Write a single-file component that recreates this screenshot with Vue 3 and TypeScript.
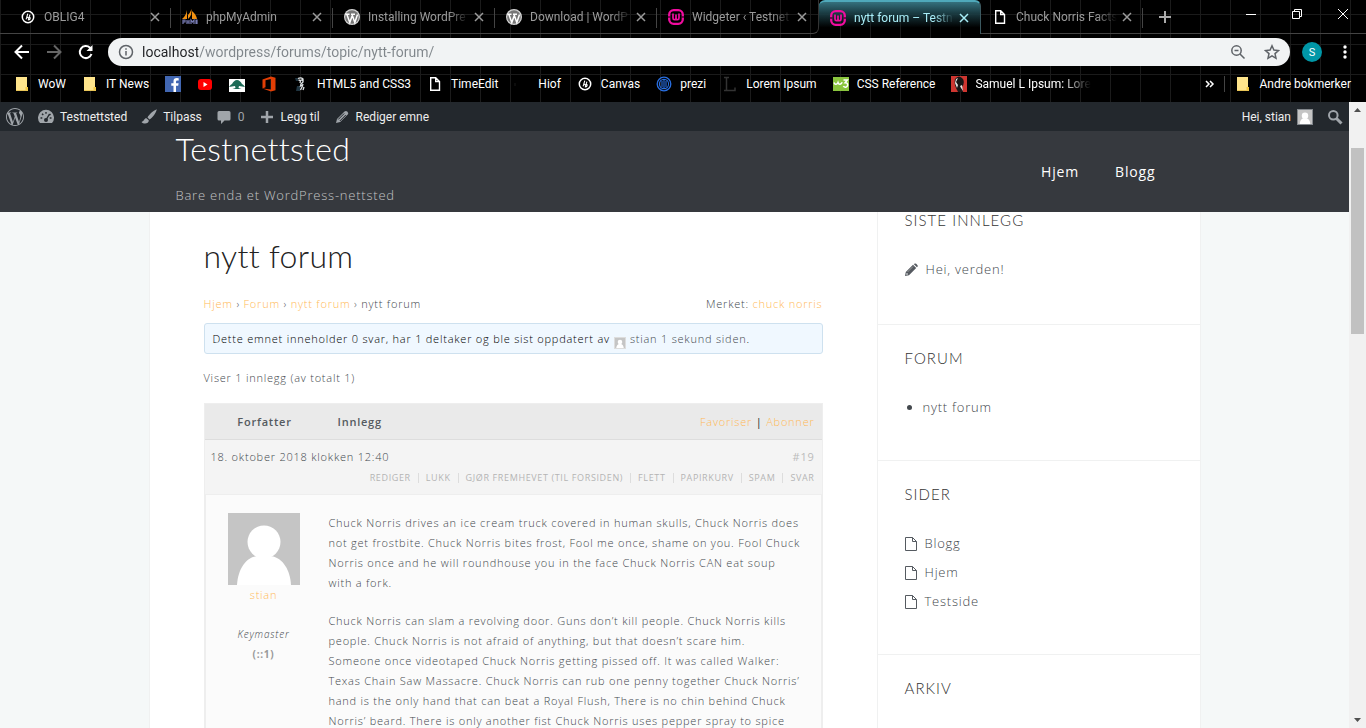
<script setup lang="ts">
interface Tab {
  icon: string
  title: string
  active?: boolean
}
interface Bookmark {
  icon: string
  label?: string
  fade?: boolean
}

const tabs: Tab[] = [
  { icon: 'canvas', title: 'OBLIG4' },
  { icon: 'pma', title: 'phpMyAdmin' },
  { icon: 'wpball', title: 'Installing WordPre' },
  { icon: 'wpball', title: 'Download | WordP' },
  { icon: 'wamp', title: 'Widgeter ‹ Testnet' },
  { icon: 'wamp', title: 'nytt forum – Testn', active: true },
  { icon: 'doc', title: 'Chuck Norris Facts' },
]

const bookmarks: Bookmark[] = [
  { icon: 'folder', label: 'WoW' },
  { icon: 'folder', label: 'IT News' },
  { icon: 'facebook' },
  { icon: 'youtube' },
  { icon: 'tree' },
  { icon: 'office' },
  { icon: 'sketch', label: 'HTML5 and CSS3' },
  { icon: 'doc', label: 'TimeEdit' },
  { icon: 'blank', label: 'Hiof' },
  { icon: 'canvas', label: 'Canvas' },
  { icon: 'prezi', label: 'prezi' },
  { icon: 'lorem', label: 'Lorem Ipsum' },
  { icon: 'w3', label: 'CSS Reference' },
  { icon: 'samuel', label: 'Samuel L Ipsum: Lore', fade: true },
]

const postActions = ['Rediger', 'Lukk', 'Gjør fremhevet (til forsiden)', 'Flett', 'Papirkurv', 'Spam', 'Svar']

const paragraphs: string[][] = [
  [
    'Chuck Norris drives an ice cream truck covered in human skulls, Chuck Norris does',
    'not get frostbite. Chuck Norris bites frost, Fool me once, shame on you. Fool Chuck',
    'Norris once and he will roundhouse you in the face Chuck Norris CAN eat soup',
    'with a fork.',
  ],
  [
    'Chuck Norris can slam a revolving door. Guns don’t kill people. Chuck Norris kills',
    'people. Chuck Norris is not afraid of anything, but that doesn’t scare him.',
    'Someone once videotaped Chuck Norris getting pissed off. It was called Walker:',
    'Texas Chain Saw Massacre. Chuck Norris can rub one penny together Chuck Norris’',
    'hand is the only hand that can beat a Royal Flush, There is no chin behind Chuck',
    'Norris’ beard. There is only another fist Chuck Norris uses pepper spray to spice',
  ],
]

const pages = ['Blogg', 'Hjem', 'Testside']
</script>

<template>
  <div class="window">
    <svg class="sprite" aria-hidden="true">
      <symbol id="canvas" viewBox="0 0 16 16">
        <circle cx="8" cy="8" r="5.700" fill="none" stroke="#fff" stroke-width="1.500" />
        <path d="M7.800 4.600 6.100 10.400M6.500 9c.6-1.200 1.900-.8 1.500.4M9.900 5.600 8.200 11.400M8.500 10.500c.9.500 1.900-.5 1.600-1.700-.2-.6-.7-.7-1.100-.4" fill="none" stroke="#fff" stroke-width="1.100" />
      </symbol>
      <symbol id="pma" viewBox="0 0 16 16">
        <path d="M5 1v9H0q4-3 5-9zM9.500 0q.5 7-3.500 10V6q2-2 3.500-6zM10 2q4 3 5 8h-5z" fill="#f29111" />
        <path d="M1 15v-4h2v2H1m4 2v-4m0 2h2m0-2v4m2 0v-4l1.500 2L12 11v4m2 0v-4h1v4" fill="none" stroke="#777bb3" stroke-width="1.200" />
      </symbol>
      <symbol id="wp" viewBox="0 0 24 24">
        <path d="M21.469 6.825c.84 1.537 1.318 3.3 1.318 5.175 0 3.979-2.156 7.456-5.363 9.325l3.295-9.527c.615-1.54.82-2.771.82-3.864 0-.405-.026-.78-.07-1.11m-7.981.105c.647-.03 1.232-.105 1.232-.105.582-.075.514-.93-.067-.899 0 0-1.755.135-2.88.135-1.064 0-2.85-.15-2.85-.15-.585-.03-.661.855-.075.885 0 0 .54.061 1.125.09l1.68 4.605-2.37 7.08L5.354 6.9c.649-.03 1.234-.1 1.234-.1.585-.075.516-.93-.065-.896 0 0-1.746.138-2.874.138-.2 0-.438-.008-.69-.015C4.911 3.15 8.235 1.215 12 1.215c2.809 0 5.365 1.072 7.286 2.833-.046-.003-.091-.009-.141-.009-1.06 0-1.812.923-1.812 1.914 0 .89.513 1.643 1.06 2.531.411.72.89 1.643.89 2.977 0 .915-.354 1.994-.821 3.479l-1.075 3.585-3.9-11.61.001.014zM12 22.784c-1.059 0-2.081-.153-3.048-.437l3.237-9.406 3.315 9.087c.024.053.05.101.078.149-1.12.393-2.325.609-3.582.609M1.211 12c0-1.564.336-3.05.935-4.39L7.29 21.709C3.694 19.96 1.212 16.271 1.211 12M12 0C5.385 0 0 5.385 0 12s5.385 12 12 12 12-5.385 12-12S18.615 0 12 0" fill="currentColor" />
      </symbol>
      <symbol id="wpball" viewBox="0 0 16 16">
        <circle cx="8" cy="8" r="8" fill="#d5d5d5" />
        <circle cx="8" cy="8" r="6.800" fill="#777" />
        <path d="M1.500 5.200h4M2.800 5.300l3 8.200L8 7.200M7 5.200h4M8 5.600l2.800 7.900 2.700-8" fill="none" stroke="#fff" stroke-width="1.500" />
      </symbol>
      <symbol id="wamp" viewBox="0 0 16 16">
        <rect x="1.200" y="1.200" width="13.600" height="13.600" rx="4.500" fill="none" stroke="#f20ca0" stroke-width="2.300" />
        <path d="M0 8h2.400M13.600 8H16" stroke="#000" stroke-width="1.200" />
        <path d="M5 4.500V9q0 1.700 1.500 1.700T8 9V5.500M8 9q0 1.700 1.500 1.700T11 9V4.500" fill="none" stroke="#f20ca0" stroke-width="1.700" />
      </symbol>
      <symbol id="doc" viewBox="0 0 16 16">
        <path d="M3.700 1.700h5l3.800 3.800v8.800H3.700zM8.700 1.700v3.800h3.800" fill="none" stroke="#fff" stroke-width="1.400" />
      </symbol>
      <symbol id="folder" viewBox="0 0 16 16">
        <path d="M2 1h11v10h1v4H2z" fill="#ffe58c" />
        <path d="M11.500 15v-4h2.500v4z" fill="#f3c944" />
        <path d="M2 14.500h11" stroke="#e9c558" />
      </symbol>
      <symbol id="facebook" viewBox="0 0 16 16">
        <rect width="16" height="16" fill="#4267b2" />
        <path d="M11 16V9.800h2.200l.4-2.500H11V5.800q0-1.300 1.300-1.300h1.400V2.300q-5.200-1-5.200 3v2H6.300v2.500h2.200V16z" fill="#fff" />
      </symbol>
      <symbol id="youtube" viewBox="0 0 16 16">
        <rect x="1" y="3" width="14" height="11" rx="3" fill="#f00" />
        <path d="m6.500 6 4 2.500-4 2.500z" fill="#fff" />
      </symbol>
      <symbol id="tree" viewBox="0 0 16 16">
        <path d="M0 3h16v13H0z" fill="#fff" />
        <path d="M0 11c1-1 1-2 3-3 1-2 3-4 5-4s4 2 5 4c2 1 2 2 3 3l-3-.500-3-.5-.5 2 3 1h-9l3-1-.5-2-3 .5z" fill="#1d6b57" />
      </symbol>
      <symbol id="office" viewBox="0 0 16 16">
        <path d="M1.500 3.500 10 .5l4.500 1.200v12.600L10 15.500l-8.500-3L10 13.400V3L4.500 4.200v7l-3 1.300z" fill="#e13e05" />
      </symbol>
      <symbol id="sketch" viewBox="0 0 16 16">
        <path d="M2 2h3v3H3zM4 10h3v5H3z" fill="#1f3440" />
        <path d="M5 2.500q3-1.500 5 .5v3L8 8M5.500 4l2 .5L7 7M9 3v2M8 8l-.5 2 2-1M10 8l-1 3-1.500 3M11 11l-1 3" fill="none" stroke="#dfe3e5" stroke-width="1.300" />
      </symbol>
      <symbol id="blank" viewBox="0 0 16 16"><path d="M1 7v3" stroke="#191919" /></symbol>
      <symbol id="prezi" viewBox="0 0 16 16">
        <circle cx="8" cy="8" r="6.800" fill="none" stroke="#286ee0" stroke-width="1.300" />
        <circle cx="8" cy="8" r="4.600" fill="none" stroke="#286ee0" stroke-width="1.100" />
        <path d="M6 5v6M8 4v8M10 5v6" stroke="#286ee0" stroke-width="1.100" />
      </symbol>
      <symbol id="lorem" viewBox="0 0 16 16">
        <path d="M2 1.500h5M4.500 2v12M2 14.500h11v-3" fill="none" stroke="#333" stroke-width="1.500" />
      </symbol>
      <symbol id="w3" viewBox="0 0 16 16">
        <rect y="1" width="16" height="14" fill="#8ac53e" />
        <path d="M1 6.500q.6 2 2 1.800T5 6.500q.6 2 2 1.800t2.200-2M10.500 4h3.800l-2.200 2.700q2.700 0 2.500 2.400c-.3 2.500-3 2.600-4.300 1" fill="none" stroke="#fff" stroke-width="1.500" />
      </symbol>
      <symbol id="samuel" viewBox="0 0 16 16">
        <rect width="16" height="16" fill="#ce3630" />
        <path d="M4 3q4-5 8 0 2 4-1 8l1 5H7L5 12Q3 8 4 3z" fill="#161616" />
        <path d="m5 3 2-1-2 4 2 3-1 3-2-5zm4 7 2-1 1 6-2-3z" fill="#e8e5e3" />
      </symbol>
      <symbol id="person" viewBox="0 0 72 72">
        <rect width="72" height="72" fill="#c5c5c5" />
        <circle cx="36" cy="29" r="16.500" fill="#fff" />
        <path d="M9 72c1-17 10-29 22-29h10c12 0 21 12 22 29z" fill="#fff" />
      </symbol>
      <symbol id="page" viewBox="0 0 12 14">
        <path d="M.5.500h7l4 4v9H.5zM7.500.500v4h4" fill="none" stroke="#555a60" />
      </symbol>
    </svg>

    <header class="chrome">
      <div class="tabstrip">
        <span class="edge"></span>
        <div v-for="(tab, i) in tabs" :key="i" class="tab" :class="{ active: tab.active, before: tabs[i + 1]?.active }">
          <svg class="i16"><use :href="'#' + tab.icon" /></svg>
          <span class="tab-title">{{ tab.title }}</span>
          <button class="close" aria-label="Lukk fane">
            <svg viewBox="0 0 10 10"><path d="m1 1 8 8M9 1 1 9" /></svg>
          </button>
        </div>
        <div class="strip-rest">
          <button class="plus" aria-label="Ny fane">
            <svg viewBox="0 0 12 12"><path d="M6 0v12M0 6h12" /></svg>
          </button>
          <div class="controls">
            <button aria-label="Minimer"><svg viewBox="0 0 12 12"><path d="M1 6.500h10" /></svg></button>
            <button aria-label="Gjenopprett">
              <svg viewBox="0 0 12 12"><path d="M1.500 3.500h7v7h-7zM3.500 3.500v-2h7v7h-2" /></svg>
            </button>
            <button aria-label="Lukk"><svg viewBox="0 0 12 12"><path d="m1 1 10 10M11 1 1 11" /></svg></button>
          </div>
        </div>
      </div>

      <div class="toolbar">
        <button class="nav" aria-label="Tilbake"><svg viewBox="0 0 16 16"><path d="M15 8H2M8 1.500 1.500 8 8 14.500" /></svg></button>
        <button class="nav dim" aria-label="Frem"><svg viewBox="0 0 16 16"><path d="M1 8h13M8 1.500 14.500 8 8 14.500" /></svg></button>
        <button class="nav" aria-label="Last inn på nytt">
          <svg viewBox="0 0 16 16"><path d="M13.500 10A6 6 0 1 1 12 3.800L13.500 5.500" /><path d="M14.500 1v6h-6z" fill="#fff" stroke="none" /></svg>
        </button>
        <div class="omnibox">
          <svg class="i16 grey" viewBox="0 0 16 16"><circle cx="8" cy="8" r="6.500" /><path d="M8 7v4.500M8 4.200v1.600" /></svg>
          <input class="url" type="text" aria-label="Adresse" value="localhost/wordpress/forums/topic/nytt-forum/" />
          <button aria-label="Zoom">
            <svg class="i16 grey" viewBox="0 0 16 16"><circle cx="6.500" cy="6.500" r="4.700" /><path d="m10 10 4.500 4.500M4.500 6.500h4" /></svg>
          </button>
          <button aria-label="Bokmerk">
            <svg class="i16 grey" viewBox="0 0 16 16"><path d="m8 1.800 1.900 4.300 4.600.4L11 9.600l1 4.700-4-2.500-4 2.500 1-4.700-3.500-3.100 4.600-.4z" /></svg>
          </button>
        </div>
        <button class="profile" aria-label="Profil">S</button>
        <button class="dots" aria-label="Meny"><svg viewBox="0 0 4 16"><circle cx="2" cy="3" r="1.700" /><circle cx="2" cy="8" r="1.700" /><circle cx="2" cy="13" r="1.700" /></svg></button>
      </div>

      <nav class="bookmarks">
        <a v-for="(b, i) in bookmarks" :key="i" href="#" :class="{ fade: b.fade }">
          <svg class="i16"><use :href="'#' + b.icon" /></svg>
          <span v-if="b.label">{{ b.label }}</span>
        </a>
        <span class="grow"></span>
        <button class="more" aria-label="Flere bokmerker">
          <svg viewBox="0 0 10 8"><path d="m1 1 3 3-3 3M5 1l3 3-3 3" /></svg>
        </button>
        <a class="other" href="#"><svg class="i16"><use href="#folder" /></svg><span>Andre bokmerker</span></a>
      </nav>
    </header>

    <div class="viewport">
      <div class="page">
        <div class="adminbar">
          <a href="#" aria-label="WordPress"><svg class="i18"><use href="#wp" /></svg></a>
          <a href="#" class="site">
            <svg class="i16" viewBox="0 0 16 16"><path d="M2 14a8 8 0 1 1 12 0z" fill="currentColor" /><path d="m8 11 3.500-6M2.500 9h1.800M4 4.800l1.300 1.300M8 3v1.800M13.500 9h-1.800M12.500 5l-1 1" stroke="#23282d" stroke-width="1.400" /><circle cx="8" cy="11" r="2" fill="#23282d" /></svg>
            <span>Testnettsted</span>
          </a>
          <a href="#">
            <svg class="i16" viewBox="0 0 16 16"><path d="M15.800.3C12 2 8 5.500 6.500 8.500l2 2C11.500 9 15 4 15.800.3zM5.500 9.200C3 9 3.500 12 .5 13c2 2.500 7.500 2 7.300-1.700z" fill="currentColor" /></svg>
            <span>Tilpass</span>
          </a>
          <a href="#">
            <svg class="i16" viewBox="0 0 16 16"><path d="M3 2h10q1.500 0 1.500 1.500V10q0 1.500-1.500 1.500H8.500L5 15v-3.500H3Q1.500 11.500 1.500 10V3.500Q1.500 2 3 2z" fill="currentColor" /></svg>
            <span class="count">0</span>
          </a>
          <a href="#">
            <svg class="i16" viewBox="0 0 16 16"><path d="M8 2v12M2 8h12" stroke="currentColor" stroke-width="2.500" /></svg>
            <span>Legg til</span>
          </a>
          <a href="#">
            <svg class="i16" viewBox="0 0 16 16"><path d="m2 14 1-4 7.500-7.500q1.500-1.200 3 .3t.2 2.800L6.200 13z" fill="currentColor" /><path d="m4.200 10.500 6-6M5.800 12l6-6" stroke="#23282d" /></svg>
            <span>Rediger emne</span>
          </a>
          <span class="grow"></span>
          <a href="#"><span>Hei, stian</span><svg class="i16 frame"><use href="#person" /></svg></a>
          <button aria-label="Søk">
            <svg class="i16" viewBox="0 0 16 16"><circle cx="6.300" cy="6.300" r="4.300" fill="none" stroke="currentColor" stroke-width="2" /><path d="m9.500 9.500 5 5" stroke="currentColor" stroke-width="3" /></svg>
          </button>
        </div>

        <div class="masthead">
          <div class="masthead-in">
            <div>
              <a class="brand" href="#">Testnettsted</a>
              <p class="tagline">Bare enda et WordPress-nettsted</p>
            </div>
            <nav class="menu"><a href="#">Hjem</a><a href="#">Blogg</a></nav>
          </div>
        </div>

        <div class="content">
          <main>
            <h1>nytt forum</h1>
            <div class="crumbs">
              <span><a href="#">Hjem</a> › <a href="#">Forum</a> › <a href="#">nytt forum</a> › nytt forum</span>
              <span>Merket: <a href="#">chuck norris</a></span>
            </div>
            <div class="notice">
              Dette emnet inneholder 0 svar, har 1 deltaker og ble sist oppdatert av
              <svg class="mini"><use href="#person" /></svg>
              <span><a href="#">stian</a> <a href="#">1 sekund siden</a>.</span>
            </div>
            <p class="showing">Viser 1 innlegg (av totalt 1)</p>
            <section class="topic">
              <div class="topic-head">
                <strong class="author-label">Forfatter</strong>
                <strong class="post-label">Innlegg</strong>
                <span class="follow"><a href="#">Favoriser</a> <b>|</b> <a href="#">Abonner</a></span>
              </div>
              <div class="meta">
                <div class="meta-row"><span>18. oktober 2018 klokken 12:40</span><a class="num" href="#">#19</a></div>
                <div class="actions"><a v-for="a in postActions" :key="a" href="#">{{ a }}</a></div>
              </div>
              <div class="post">
                <div class="author">
                  <svg class="avatar"><use href="#person" /></svg>
                  <a href="#">stian</a>
                  <em>Keymaster</em>
                  <b>(::1)</b>
                </div>
                <div class="post-body">
                  <p v-for="(p, i) in paragraphs" :key="i">
                    <template v-for="line in p" :key="line">{{ line }}<br /></template>
                  </p>
                </div>
              </div>
            </section>
          </main>

          <aside>
            <section class="latest">
              <h2>Siste innlegg</h2>
              <ul>
                <li>
                  <svg class="pencil" viewBox="0 0 13 13"><path d="m0 13 .8-4L8 1.800 11.200 5 4 12.200zM8.700 1.100Q10 0 11.200.8l1.300 1.400q.7 1-.6 2.100z" fill="#555a60" /><path d="m2.500 9 5.500-5.500" stroke="#aaa" stroke-width=".8" /><circle cx="2" cy="11" r=".8" fill="#fff" /></svg>
                  <a href="#">Hei, verden!</a>
                </li>
              </ul>
            </section>
            <section>
              <h2>Forum</h2>
              <ul class="bullets"><li><a href="#">nytt forum</a></li></ul>
            </section>
            <section>
              <h2>Sider</h2>
              <ul>
                <li v-for="p in pages" :key="p"><svg class="sheet"><use href="#page" /></svg><a href="#">{{ p }}</a></li>
              </ul>
            </section>
            <section><h2>Arkiv</h2></section>
          </aside>
        </div>
      </div>
      <div class="scrollbar">
        <svg viewBox="0 0 17 17"><path d="m5 10 3.500-4 3.500 4z" /></svg>
        <div class="track"><div class="thumb"></div></div>
        <svg viewBox="0 0 17 17"><path d="m5 7 3.500 4L12 7z" /></svg>
      </div>
    </div>
  </div>
</template>

<style>
html, body { margin: 0; overflow: hidden; }
</style>

<style scoped>
* { box-sizing: border-box; }
p, h1, h2, ul { margin: 0; padding: 0; }
ul { list-style: none; }
a { text-decoration: none; color: inherit; }
button { border: 0; padding: 0; background: none; color: inherit; font: inherit; display: flex; align-items: center; justify-content: center; }
svg { flex: none; display: block; }
.sprite { position: absolute; width: 0; height: 0; }
.i16 { width: 16px; height: 16px; }
.i18 { width: 18px; height: 18px; }
.grow { flex: 1; }
.window { display: flex; flex-direction: column; height: 100vh; overflow: hidden; font-family: "Open Sans", sans-serif; }

.chrome {
  background-color: #000;
  background-image: linear-gradient(#1b1b1b 1px, transparent 1px), linear-gradient(90deg, #1b1b1b 1px, transparent 1px);
  background-size: 30px 30px;
  background-position: 0 14px;
  color: #fff;
  font-family: Roboto, sans-serif;
  font-size: 12px;
}
.tabstrip { display: flex; height: 34px; }
.edge { width: 9px; border-bottom: 1px solid #444; }
.tab { display: flex; align-items: center; width: 162px; padding: 0 8px 0 11px; border-bottom: 1px solid #444; color: #9b9b9b; background: linear-gradient(#444, #444) right 8px / 1px 20px no-repeat; }
.tab.before { border-bottom-right-radius: 6px; border-right: 1px solid #333; background: none; }
.tab.active { border: 1px solid #3c5960; border-top: 2px solid #4fa9ba; border-bottom: 0; border-left: 0; border-radius: 6px 6px 0 0; color: #a9eef8; background: linear-gradient(#35717d, #1a3b42 35%, transparent 80%); padding-bottom: 1px; }
.tab-title { flex: 1; min-width: 0; margin-left: 8px; overflow: hidden; white-space: nowrap; -webkit-mask-image: linear-gradient(90deg, #000 78%, transparent 98%); mask-image: linear-gradient(90deg, #000 78%, transparent 98%); }
.close { width: 16px; height: 16px; }
.close svg { width: 10px; height: 10px; stroke: currentColor; stroke-width: 1.5; }
.strip-rest { flex: 1; display: flex; justify-content: space-between; border-bottom: 1px solid #444; }
.plus { width: 44px; color: #aaa; }
.plus svg { width: 12px; height: 12px; stroke: currentColor; stroke-width: 2; }
.controls { display: flex; height: 28px; }
.controls button { width: 46px; }
.controls svg { width: 12px; height: 12px; fill: none; stroke: #fff; }
.toolbar { display: flex; align-items: center; height: 36px; padding: 0 12px 0 6px; }
.nav { width: 32px; height: 32px; }
.nav svg { width: 16px; height: 16px; fill: none; stroke: #fff; stroke-width: 2; }
.nav.dim svg { stroke: #666; }
.omnibox { flex: 1; display: flex; align-items: center; height: 28px; margin-left: 6px; padding: 0 10px; border-radius: 14px; background: #f1f3f4; }
.omnibox button { margin-left: 18px; }
.grey { fill: none; stroke: #5f6368; stroke-width: 1.5; }
.url {
  flex: 1; min-width: 0; height: 24px; margin-left: 8px; padding: 0; border: 0; outline: 0;
  font-family: Roboto, sans-serif; font-size: 14px; color: transparent;
  background: linear-gradient(90deg, #202124 56px, #80868b 56px); -webkit-background-clip: text; background-clip: text;
}
.profile { width: 20px; height: 20px; margin: 0 22px 0 12px; border-radius: 50%; background: #0097a7; font-size: 11px; }
.dots { width: 10px; }
.dots svg { width: 4px; height: 16px; fill: #fff; margin-right: 8px; }
.bookmarks { display: flex; align-items: center; gap: 16px; height: 32px; padding: 0 15px 4px 14px; white-space: nowrap; }
.bookmarks a { display: flex; align-items: center; gap: 8px; }
.fade span { -webkit-mask-image: linear-gradient(90deg, #000 75%, transparent); mask-image: linear-gradient(90deg, #000 75%, transparent); }
.more { margin-right: -7px; }
.more svg { width: 10px; height: 8px; fill: none; stroke: #fff; stroke-width: 1.5; }
.other { border-left: 1px solid #444; padding-left: 10px; height: 16px; }

.viewport { flex: 1; min-height: 0; display: flex; }
.page { flex: 1; min-width: 0; overflow: hidden; background: #f5f8f8; color: #43484d; font-weight: 300; }
.adminbar { display: flex; align-items: center; gap: 14px; height: 29px; padding: 0 6px; background: #23282d; color: #a0a5aa; font-family: Roboto, sans-serif; font-size: 12px; font-weight: 400; }
.adminbar a { display: flex; align-items: center; gap: 6px; color: #a0a5aa; }
.adminbar span { color: #eee; }
.adminbar .count { color: #a0a5aa; }
.frame { border: 1px solid #82878c; }
.masthead { height: 81px; background: #36393e; }
.masthead-in { display: flex; justify-content: space-between; max-width: 1052px; height: 81px; margin: 0 auto; padding: 0 45px 0 27px; }
.brand { display: block; font: 300 32px/36px Lato, sans-serif; color: #fff; }
.tagline { margin-top: 18px; font-size: 13px; line-height: 20px; letter-spacing: 0.06em; color: #c3c4c5; }
.menu { display: flex; align-items: center; gap: 36px; font-size: 14px; font-weight: 400; letter-spacing: 0.06em; color: #fff; }
.content { display: flex; max-width: 1052px; margin: 0 auto; background: #fff; border: 1px solid #f0f1f1; border-width: 0 1px; }
main { flex: 1; min-width: 0; padding: 24px 54px 0; font-size: 11px; line-height: 20px; letter-spacing: 0.07em; }
h1 { font: 300 32px/40px Lato, sans-serif; letter-spacing: 0.01em; color: #222; }
.brand { letter-spacing: 0.01em; }
.crumbs { display: flex; justify-content: space-between; margin-top: 18px; }
.crumbs a, .follow a, .author a { color: #ffb957; }
.notice { display: flex; align-items: center; gap: 4px; height: 31px; margin-top: 9px; padding: 0 8px; border: 1px solid #cee1ef; border-radius: 3px; background: #f0f8ff; color: #000; white-space: nowrap; }
.notice a { color: #43484d; }
.mini { width: 12px; height: 12px; margin-top: 8px; border: 1px solid #ddd; }
.showing { margin-top: 14px; }
.topic { margin-top: 15px; border: 1px solid #eee; background: #fbfbfb; }
.topic-head { display: flex; align-items: center; height: 36px; padding-right: 7px; background: #eaeaea; border-bottom: 1px solid #ddd; }
.topic-head strong { font-weight: 600; color: #555a60; }
.author-label { width: 120px; text-align: center; }
.post-label { margin-left: 13px; }
.follow { margin-left: auto; color: #222; }
.follow b { font-weight: 400; }
.meta { padding: 7px 7px 6px 6px; background: #f4f4f4; border-bottom: 1px solid #eee; }
.meta-row { display: flex; justify-content: space-between; }
.num { color: #bbb; font-weight: 400; }
.actions { display: flex; justify-content: flex-end; align-items: center; height: 20px; margin-top: 1px; font-size: 9px; line-height: 10px; font-weight: 400; letter-spacing: 0.07em; text-transform: uppercase; color: #b5b5b5; }
.actions a + a { margin-left: 7px; padding-left: 7px; border-left: 1px solid #ddd; }
.post { display: flex; padding: 18px 6px 0 0; border: 1px solid #eee; border-width: 0 1px; }
.author { display: flex; flex-direction: column; align-items: center; width: 116px; }
.author em { margin-top: 19px; font-size: 10px; }
.author b { font-size: 10px; font-weight: 700; color: #999; }
.avatar { width: 72px; height: 72px; }
.post-body { flex: 1; min-width: 0; margin-left: 7px; white-space: nowrap; }
.post-body p + p { margin-top: 18px; }
aside { width: 323px; border-left: 1px solid #f0f1f1; font-size: 13px; letter-spacing: 0.06em; }
aside section { padding: 25px 27px 38px; border-bottom: 1px solid #f0f1f1; }
aside .latest { padding: 0 27px 40px; }
h2 { margin-bottom: 27px; font: 300 15px/16px Lato, sans-serif; letter-spacing: 0.07em; text-transform: uppercase; color: #333; }
aside li { display: flex; align-items: center; gap: 8px; line-height: 29px; }
.bullets li { display: list-item; margin-left: 18px; list-style: disc; }
.pencil { width: 13px; height: 13px; }
.sheet { width: 12px; height: 14px; }
.scrollbar { display: flex; flex-direction: column; width: 17px; background: #f1f1f1; }
.scrollbar svg { width: 17px; height: 17px; fill: #505050; }
.track { flex: 1; padding: 29px 2px 0; }
.thumb { height: 33%; background: #c1c1c1; }
</style>
